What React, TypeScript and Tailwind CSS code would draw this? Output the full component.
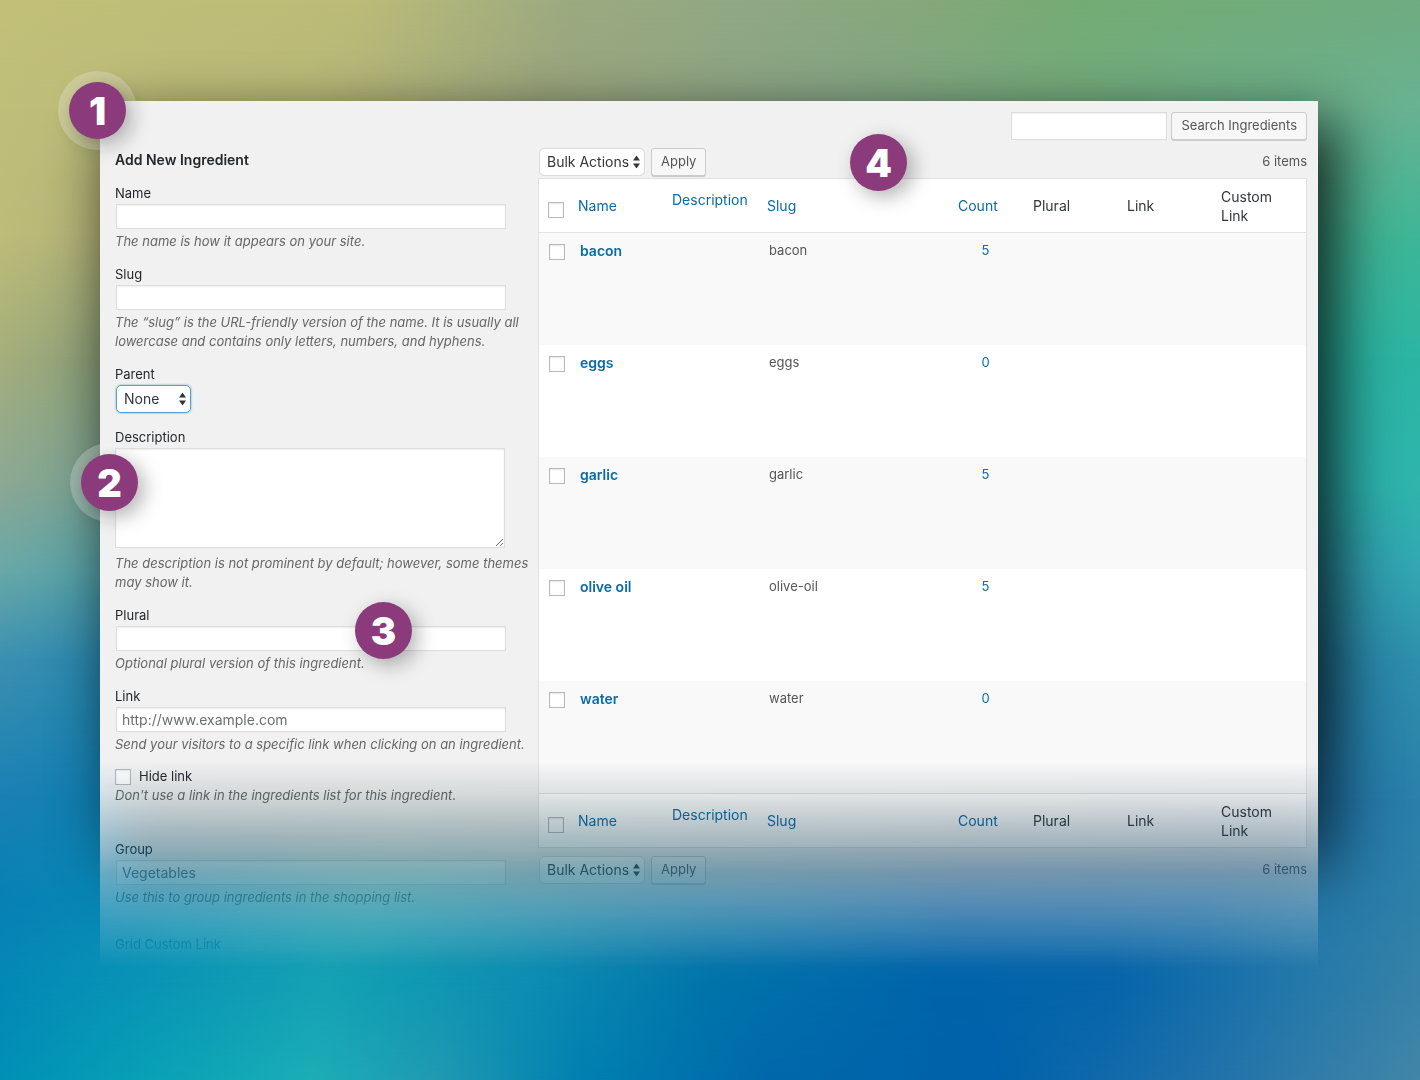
import React from 'react';

interface Ingredient {
  name: string;
  slug: string;
  count: number;
}

const ingredients: Ingredient[] = [
  { name: 'bacon', slug: 'bacon', count: 5 },
  { name: 'eggs', slug: 'eggs', count: 0 },
  { name: 'garlic', slug: 'garlic', count: 5 },
  { name: 'olive oil', slug: 'olive-oil', count: 5 },
  { name: 'water', slug: 'water', count: 0 },
];

// Each layer is one horizontal band of colours that fades in over the band above it
const backdropLayers: string[] = [
  'bg-[linear-gradient(to_right,#c2c079,#bcbc78_25%,#9caa80_40%,#90a884_53%,#84a87a_66%,#74ac74_76%,#6fac80)]',
  'bg-[linear-gradient(to_right,#bfbe7a,#b8b878_22%,#9aa47c_38%,#86a384_58%,#74aa7c_75%,#68b292)] mask-[linear-gradient(to_bottom,transparent,black_10%)]',
  'bg-[linear-gradient(to_right,#bdbc78,#b0b078_8%,#44b090_92%,#3eb696)] mask-[linear-gradient(to_bottom,transparent_10%,black_22%)]',
  'bg-[linear-gradient(to_right,#a5ae7c,#8a9f78_8%,#2ab3a0_92%,#2cb5a3)] mask-[linear-gradient(to_bottom,transparent_22%,black_33%)]',
  'bg-[linear-gradient(to_right,#8ba894,#76a092_8%,#2aabaa_92%,#2fb5ac)] mask-[linear-gradient(to_bottom,transparent_33%,black_45%)]',
  'bg-[linear-gradient(to_right,#68a8a8,#529fa6_8%,#2c94a8_92%,#33a6b2)] mask-[linear-gradient(to_bottom,transparent_45%,black_53%)]',
  'bg-[linear-gradient(to_right,#3c90b0,#2888b0_8%,#2580a6_92%,#2f8fac)] mask-[linear-gradient(to_bottom,transparent_53%,black_61%)]',
  'bg-[linear-gradient(to_right,#1a80b4,#0f80b2_8%,#2f98a8_28%,#3a84a0_60%,#1f70a4_92%,#2a80aa)] mask-[linear-gradient(to_bottom,transparent_61%,black_74%)]',
  'bg-[linear-gradient(to_right,#0880b4,#0888b6_8%,#1f98ac_26%,#1c80a8_45%,#1c6ca8_68%,#1c70a8_85%,#2e80a8)] mask-[linear-gradient(to_bottom,transparent_74%,black_83%)]',
  'bg-[linear-gradient(to_right,#0488b6,#0893b6_9%,#14a2b4_23%,#0c8cb2_38%,#0074aa_50%,#0064aa_66%,#0664aa_78%,#2378aa_91%,#3682a8)] mask-[linear-gradient(to_bottom,transparent_83%,black_91%)]',
  'bg-[linear-gradient(to_right,#0090b6,#08a2b6_11%,#1cadb6_22%,#2099b2_31%,#0080b0_41%,#0068aa_54%,#0062aa_70%,#1e70aa_84%,#4286a8)] mask-[linear-gradient(to_bottom,transparent_91%,black)]',
];

const inputStyle =
  'block h-[25px] w-[390px] ml-px mt-px border border-[#ddd] bg-white px-[5px] text-sm text-[#32373c] shadow-[inset_0_1px_2px_rgba(0,0,0,0.07)] outline-none placeholder:text-[#6a6f74]';
const checkboxStyle =
  'block size-4 appearance-none border border-[#b4b9be] bg-white shadow-[inset_0_1px_2px_rgba(0,0,0,0.1)]';
const buttonStyle =
  'h-7 rounded-[3px] border border-[#ccc] bg-[#f7f7f7] px-[9px] text-[13px] text-[#555] shadow-[0_1px_0_#ccc]';
const linkStyle = 'text-[#0a6ba6]';

const Backdrop: React.FC = () => (
  <div className="absolute inset-0" aria-hidden="true">
    {backdropLayers.map((layer, index) => (
      <div key={index} className={`absolute inset-0 ${layer}`}></div>
    ))}
    {/* soft shadow under the whole panel, it also shows through the faded end */}
    <div className="absolute left-[112px] right-[84px] top-[122px] h-[750px] bg-[linear-gradient(to_bottom,rgba(0,0,0,0.8)_78%,rgba(0,0,0,0.45))] blur-[30px]"></div>
  </div>
);

interface SelectBoxProps {
  id: string;
  option: string;
  className: string;
}

const SelectBox: React.FC<SelectBoxProps> = ({ id, option, className }) => (
  <div className={`relative ${className}`}>
    <select
      id={id}
      aria-label={option}
      className="h-full w-full appearance-none rounded-[5px] bg-white pl-[7px] text-sm text-[#32373c] outline-none"
    >
      <option>{option}</option>
    </select>
    <svg className="pointer-events-none absolute right-1 top-1/2 -translate-y-1/2" width="7" height="13" viewBox="0 0 7 13">
      <path d="M3.5 0 7 5H0zM3.5 13 0 8h7z" fill="#32373c" />
    </svg>
  </div>
);

interface TextFieldProps {
  id: string;
  label: string;
  help: string;
  placeholder?: string;
}

const TextField: React.FC<TextFieldProps> = ({ id, label, help, placeholder }) => (
  <div>
    <label htmlFor={id} className="block leading-5">{label}</label>
    <input id={id} type="text" placeholder={placeholder} className={inputStyle} />
    <p className="mt-[3px] italic text-[#666]">{help}</p>
  </div>
);

const IngredientForm: React.FC = () => (
  <form className="w-[421px] shrink-0 pt-[49px] text-[13px] leading-[19px] text-[#23282d]">
    <h2 className="mb-[13px] text-sm font-semibold leading-5">Add New Ingredient</h2>
    <div className="flex flex-col gap-[13px]">
      <TextField id="name" label="Name" help="The name is how it appears on your site." />
      <TextField
        id="slug"
        label="Slug"
        help="The “slug” is the URL-friendly version of the name. It is usually all lowercase and contains only letters, numbers, and hyphens."
      />
      <div>
        <label htmlFor="parent" className="block leading-5">Parent</label>
        <SelectBox
          id="parent"
          option="None"
          className="ml-px mt-px mb-px h-7 w-[75px] rounded-[5px] border border-[#5b9dd9] shadow-[0_0_2px_rgba(30,140,190,0.8)]"
        />
      </div>
      <div>
        <label htmlFor="description" className="block leading-5">Description</label>
        <textarea
          id="description"
          className="mt-px block h-[100px] w-[390px] border border-[#ddd] bg-white p-1.5 text-sm shadow-[inset_0_1px_2px_rgba(0,0,0,0.07)] outline-none"
        ></textarea>
        <p className="mt-1.5 italic text-[#666]">
          The description is not prominent by default; however, some themes may show it.
        </p>
      </div>
      <TextField id="plural" label="Plural" help="Optional plural version of this ingredient." />
      <TextField
        id="link"
        label="Link"
        placeholder="http://www.example.com"
        help="Send your visitors to a specific link when clicking on an ingredient."
      />
      <div>
        <div className="flex items-center gap-2">
          <input id="hide-link" type="checkbox" className={checkboxStyle} />
          <label htmlFor="hide-link">Hide link</label>
        </div>
        <p className="italic text-[#666]">Don't use a link in the ingredients list for this ingredient.</p>
      </div>
      <div className="mt-[21px]">
        <TextField
          id="group"
          label="Group"
          placeholder="Vegetables"
          help="Use this to group ingredients in the shopping list."
        />
      </div>
      <p className="mt-3.5 pb-6 leading-5">Grid Custom Link</p>
    </div>
  </form>
);

interface BulkBarProps {
  id: string;
}

const BulkBar: React.FC<BulkBarProps> = ({ id }) => (
  <div className="mt-2 flex items-center gap-1.5 pl-px">
    <SelectBox id={id} option="Bulk Actions" className="h-7 w-[106px] rounded-[5px] border border-[#ddd]" />
    <button type="button" className={buttonStyle}>Apply</button>
    <span className="ml-auto text-[13px] text-[#555]">6 items</span>
  </div>
);

interface HeadingRowProps {
  edge: string;
}

const HeadingRow: React.FC<HeadingRowProps> = ({ edge }) => {
  const cell = `border-[#e1e1e1] px-2.5 text-left font-normal ${edge}`;
  return (
    <tr className="h-[54px] text-sm leading-[19px] text-[#32373c]">
      <td className={`border-[#e1e1e1] pl-[9px] pt-2 ${edge}`}>
        <input type="checkbox" aria-label="Select all" className={checkboxStyle} />
      </td>
      <th className={cell}><a href="#name" className={linkStyle}>Name</a></th>
      <th className={`${cell} pt-[11px] align-top`}><a href="#description" className={linkStyle}>Description</a></th>
      <th className={cell}><a href="#slug" className={linkStyle}>Slug</a></th>
      <th className={cell}><a href="#count" className={linkStyle}>Count</a></th>
      <th className={cell}>Plural</th>
      <th className={cell}>Link</th>
      <th className={cell}>Custom Link</th>
    </tr>
  );
};

const IngredientTable: React.FC = () => (
  <table className="mt-0.5 w-full table-fixed border-separate border-spacing-0 border border-[#e1e1e1] bg-white">
    <colgroup>
      <col className="w-[29px]" />
      <col className="w-[94px]" />
      <col className="w-[95px]" />
      <col className="w-[191px]" />
      <col className="w-[75px]" />
      <col className="w-[94px]" />
      <col className="w-[94px]" />
      <col className="w-[95px]" />
    </colgroup>
    <thead>
      <HeadingRow edge="border-b" />
    </thead>
    <tbody>
      {ingredients.map((item) => (
        <tr key={item.slug} className="h-28 align-top text-[13px] leading-[19px] text-[#555] odd:bg-[#f9f9f9]">
          <td className="pl-2.5 pt-[11px]">
            <input type="checkbox" aria-label={`Select ${item.name}`} className={checkboxStyle} />
          </td>
          <td className="px-3 pt-2 text-sm leading-[19px]">
            <a href={`#${item.slug}`} className={`font-semibold ${linkStyle}`}>{item.name}</a>
          </td>
          <td></td>
          <td className="px-3 pt-2">{item.slug}</td>
          <td className="pt-2 text-center">
            <a href={`#${item.slug}-posts`} className={linkStyle}>{item.count}</a>
          </td>
          <td></td>
          <td></td>
          <td></td>
        </tr>
      ))}
    </tbody>
    <tfoot>
      <HeadingRow edge="border-t" />
    </tfoot>
  </table>
);

interface BadgeProps {
  step: number;
  className: string;
}

const Badge: React.FC<BadgeProps> = ({ step, className }) => (
  <div
    className={`absolute flex size-[57px] items-center justify-center rounded-full bg-[#8b3a7b] text-[38px] font-black leading-none text-white ${className}`}
  >
    {step}
  </div>
);

const App: React.FC = () => {
  return (
    <main className="relative min-h-screen overflow-hidden font-['Inter',sans-serif]">
      <Backdrop />
      <div className="relative pl-[100px] pr-[102px] pt-[101px] mask-[linear-gradient(to_bottom,black_762px,rgba(0,0,0,0.86)_797px,rgba(0,0,0,0.57)_850px,rgba(0,0,0,0.42)_872px,rgba(0,0,0,0.13)_940px,transparent_968px)]">
        <div className="flex items-start gap-0.5 bg-[#f1f1f1] pl-[15px] pr-[11px]">
          <IngredientForm />
          <section className="min-w-0 flex-1 pt-[11px]">
            <div className="flex justify-end gap-1">
              <input
                type="search"
                aria-label="Search Ingredients"
                className="h-7 w-[156px] border border-[#ddd] bg-white px-[5px] text-sm shadow-[inset_0_1px_2px_rgba(0,0,0,0.07)] outline-none"
              />
              <button type="button" className={buttonStyle}>Search Ingredients</button>
            </div>
            <BulkBar id="bulk-top" />
            <IngredientTable />
            <BulkBar id="bulk-bottom" />
          </section>
        </div>
      </div>
      <Badge step={1} className="left-[69px] top-[82px] shadow-[6px_6px_20px_rgba(0,0,0,0.3),0_0_0_11px_rgba(255,255,255,0.24)]" />
      <Badge step={2} className="left-[81px] top-[454px] shadow-[6px_6px_20px_rgba(0,0,0,0.3),0_0_0_11px_rgba(255,255,255,0.24)]" />
      <Badge step={3} className="left-[355px] top-[602px] shadow-[6px_6px_20px_rgba(0,0,0,0.3)]" />
      <Badge step={4} className="left-[850px] top-[134px] shadow-[6px_6px_20px_rgba(0,0,0,0.3)]" />
    </main>
  );
};

export default App;
